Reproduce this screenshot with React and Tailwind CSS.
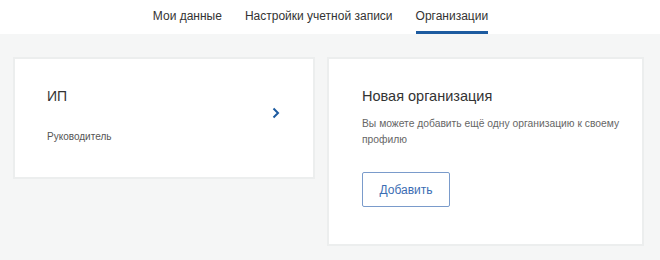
const tabs = ["Мои данные", "Настройки учетной записи", "Организации"];

const App = () => {
  return (
    <div className="w-[660px] h-[260px] bg-[#f5f6f6] font-['Liberation_Sans'] overflow-hidden">
      <div className="h-[34px] bg-white flex justify-center pr-[19px]">
        <div className="flex gap-[23px]">
          {tabs.map((t, i) => (
            <div
              key={t}
              className={
                "h-[34px] flex items-center text-[12px] text-[#333] border-b-[3px] " +
                (i === 2 ? "border-[#1d5ba0]" : "border-transparent")
              }
            >
              {t}
            </div>
          ))}
        </div>
      </div>

      <div className="flex gap-[12px] px-[13px] pt-[23px] items-start">
        <div className="w-[302px] h-[122px] bg-white border-2 border-[#eceeee] flex justify-between pl-[32px] pr-[32px] pt-[28px]">
          <div>
            <div className="text-[14px] text-[#333] leading-[18px]">ИП</div>
            <div className="text-[10px] text-[#555] leading-[14px] mt-[25px]">Руководитель</div>
          </div>
          <svg width="10" height="12" viewBox="0 0 10 12" className="mt-[20px]">
            <path d="M2.5 1.5 L7 6 L2.5 10.5" fill="none" stroke="#1d5ba0" strokeWidth="2" />
          </svg>
        </div>

        <div className="w-[317px] h-[189px] bg-white border-2 border-[#eceeee] pl-[33px] pt-[27px]">
          <div className="text-[14.5px] text-[#333] leading-[20px]">Новая организация</div>
          <div className="text-[10.3px] text-[#666] leading-[16px] mt-[10px] w-[265px]">
            Вы можете добавить ещё одну организацию к своему профилю
          </div>
          <button className="mt-[24px] w-[88px] h-[35px] border border-[#7a9bcb] rounded-[2px] text-[12px] text-[#3b6db3]">
            Добавить
          </button>
        </div>
      </div>
    </div>
  );
};

export default App;
